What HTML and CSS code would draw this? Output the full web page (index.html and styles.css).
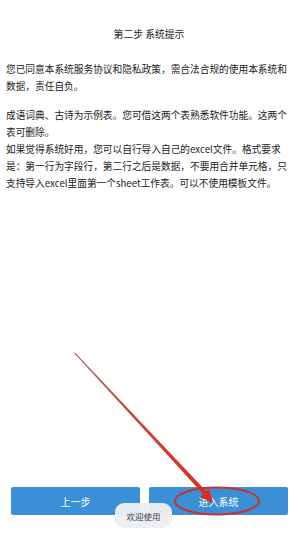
FILE: index.html
```html
<!DOCTYPE html>
<html lang="zh">
<head>
<meta charset="utf-8">
<link rel="stylesheet" href="styles.css">
</head>
<body>
<div class="page">
  <h1 class="title">第二步 系统提示</h1>
  <p class="para">您已同意本系统服务协议和隐私政策，需合法合规的使用本系统和数据，责任自负。</p>
  <p class="para">成语词典、古诗为示例表。您可借这两个表熟悉软件功能。这两个表可删除。<br>如果觉得系统好用，您可以自行导入自己的excel文件。格式要求是：第一行为字段行，第二行之后是数据，不要用合并单元格，只支持导入excel里面第一个sheet工作表。可以不使用模板文件。</p>
  <div class="actions">
    <button class="btn btn-prev">上一步</button>
    <button class="btn btn-next">进入系统</button>
  </div>
</div>
<div class="toast">欢迎使用</div>
<svg class="annot" width="298" height="537" viewBox="0 0 298 537">
  <defs>
    <linearGradient id="g" x1="74" y1="353" x2="213" y2="502" gradientUnits="userSpaceOnUse">
      <stop offset="0" stop-color="#b0605a"/>
      <stop offset="1" stop-color="#e02a1a"/>
    </linearGradient>
  </defs>
  <polygon points="74,353 75,352.5 207,492 204,495" fill="url(#g)"/>
  <polygon points="213,503 200,497 209,489" fill="#e02a1a"/>
  <ellipse cx="217" cy="501" rx="42" ry="13.5" fill="none" stroke="#c8322a" stroke-width="2"/>
</svg>
</body>
</html>
```
FILE: styles.css
```css
html, body {
  margin: 0;
  padding: 0;
  background: #ffffff;
}
body {
  font-family: "Noto Sans CJK SC", "Noto Sans", sans-serif;
  color: #222222;
  width: 298px;
  height: 537px;
  position: relative;
  overflow: hidden;
}
.page {
  display: flex;
  flex-direction: column;
  height: 537px;
  box-sizing: border-box;
  padding: 26px 6px 22px 6px;
}
.title {
  margin: 0 0 18px 0;
  font-size: 9.8px;
  font-weight: normal;
  text-align: center;
  line-height: 17px;
}
.para {
  margin: 0 0 12px 0;
  font-size: 9.7px;
  line-height: 17px;
}
.actions {
  margin-top: auto;
  display: flex;
  gap: 9px;
  padding: 0 4px 0 5px;
}
.btn {
  height: 28px;
  border: none;
  border-radius: 2px;
  background: #3b8fd6;
  color: #ffffff;
  font-family: "Noto Sans CJK SC", sans-serif;
  font-size: 10px;
  padding: 0;
}
.btn-prev {
  flex: 129 1 0;
}
.btn-next {
  flex: 139 1 0;
}
.toast {
  position: absolute;
  left: 115px;
  top: 503px;
  width: 57px;
  height: 25px;
  border-radius: 9px;
  background: rgba(236, 238, 240, 0.96);
  color: #444444;
  font-size: 8.5px;
  display: flex;
  align-items: center;
  justify-content: center;
}
.annot {
  position: absolute;
  left: 0;
  top: 0;
  pointer-events: none;
}
```
